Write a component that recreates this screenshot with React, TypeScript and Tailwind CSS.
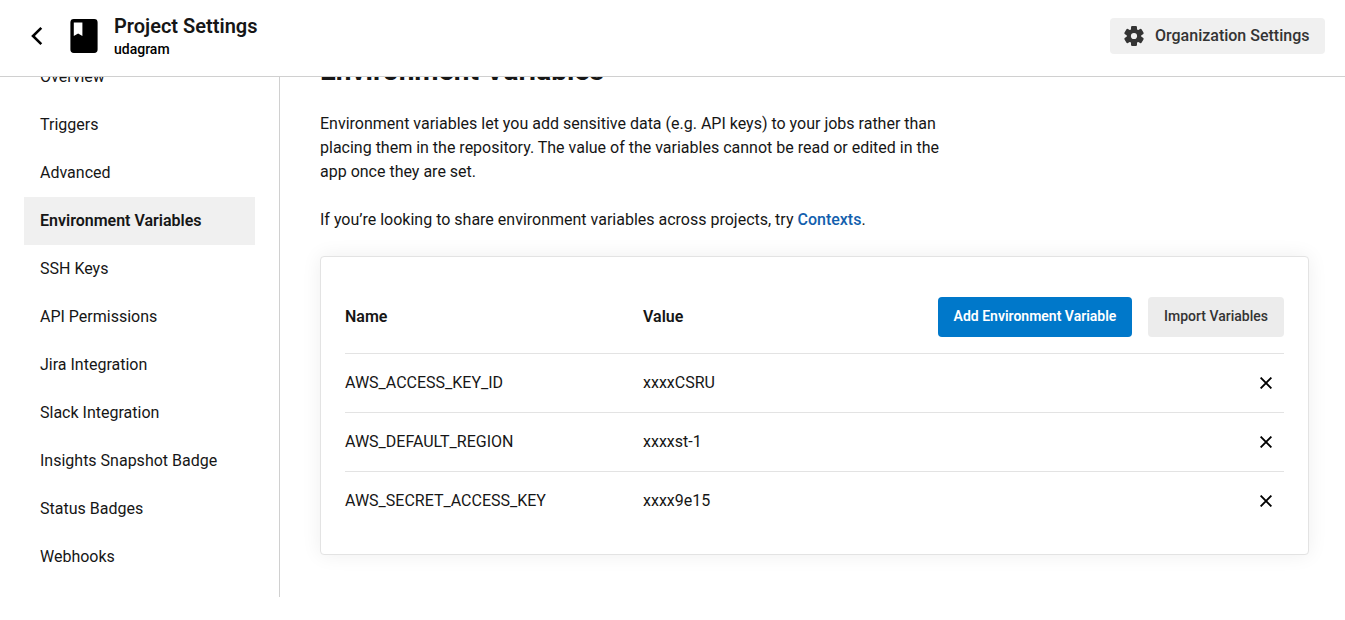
const NAV_ITEMS = [
  'Overview',
  'Triggers',
  'Advanced',
  'Environment Variables',
  'SSH Keys',
  'API Permissions',
  'Jira Integration',
  'Slack Integration',
  'Insights Snapshot Badge',
  'Status Badges',
  'Webhooks',
];

const VARIABLES = [
  { name: 'AWS_ACCESS_KEY_ID', value: 'xxxxCSRU' },
  { name: 'AWS_DEFAULT_REGION', value: 'xxxxst-1' },
  { name: 'AWS_SECRET_ACCESS_KEY', value: 'xxxx9e15' },
];

function BackIcon() {
  return (
    <svg className="h-5 w-3" viewBox="0 0 12 20" fill="none" stroke="#000" strokeWidth="2.6">
      <path d="M10.3 1.8 2 10l8.3 8.2" />
    </svg>
  );
}

function ProjectIcon() {
  return (
    <svg className="h-[34px] w-7" viewBox="0 0 28 34">
      <path
        fill="#000"
        fillRule="evenodd"
        d="M3.8 0h20.4a3.4 3.4 0 0 1 3.4 3.4v27.2a3.4 3.4 0 0 1-3.4 3.4H3.8A3.4 3.4 0 0 1 .4 30.6V3.4A3.4 3.4 0 0 1 3.8 0Zm0 3.4V17l4.3-2.6 4.3 2.6V3.4Z"
      />
    </svg>
  );
}

function GearIcon() {
  return (
    <svg className="h-6 w-6" viewBox="0 0 24 24" fill="#343434">
      <rect x="9" y="2.1" width="6" height="19.8" rx="1.2" />
      <rect x="9" y="2.1" width="6" height="19.8" rx="1.2" transform="rotate(60 12 12)" />
      <rect x="9" y="2.1" width="6" height="19.8" rx="1.2" transform="rotate(120 12 12)" />
      <circle cx="12" cy="12" r="7.3" />
      <circle cx="12" cy="12" r="3.1" fill="#f0f0f0" />
    </svg>
  );
}

function CloseIcon() {
  return (
    <svg className="h-3 w-3" viewBox="0 0 12 12" fill="none" stroke="#000" strokeWidth="1.9">
      <path d="m.6.6 10.8 10.8M11.4.6.6 11.4" />
    </svg>
  );
}

function Header() {
  return (
    <header className="flex h-[77px] items-start justify-between border-b border-[#d0d0d0] bg-white">
      <div className="flex items-start pl-[31px]">
        <button className="mt-[26px]" aria-label="Back">
          <BackIcon />
        </button>
        <div className="mt-[19px] ml-[27px]">
          <ProjectIcon />
        </div>
        <div className="mt-3.5 ml-4">
          <h1 className="text-xl leading-6 font-semibold">Project Settings</h1>
          <p className="mt-px text-sm leading-5 font-medium text-black">udagram</p>
        </div>
      </div>
      <button className="mt-[18px] mr-5 flex h-9 w-[215px] items-center gap-[9px] rounded bg-[#f0f0f0] pl-3 font-medium whitespace-nowrap text-[#343434]">
        <GearIcon />
        Organization Settings
      </button>
    </header>
  );
}

function Sidebar() {
  return (
    <nav className="w-[280px] shrink-0 border-r border-[#d0d0d0] pr-6 pl-6">
      <ul className="-mt-6">
        {NAV_ITEMS.map((item) => (
          <li
            key={item}
            className={
              item === 'Environment Variables'
                ? 'flex h-12 items-center bg-[#f0f0f0] px-4 font-semibold'
                : 'flex h-12 items-center px-4'
            }
          >
            {item}
          </li>
        ))}
      </ul>
    </nav>
  );
}

function VariablesCard() {
  return (
    <section className="mt-6 rounded border border-[#e3e3e3] bg-white p-6 shadow-[0_0_20px_rgba(0,0,0,0.07)]">
      <div className="flex items-center border-b border-[#e3e3e3] py-4 font-semibold">
        <div className="w-[298px]">Name</div>
        <div className="flex-1">Value</div>
        <div className="flex gap-4 text-sm">
          <button className="h-10 w-[194px] rounded bg-[#0078ca] pb-0.5 font-semibold text-white">
            Add Environment Variable
          </button>
          <button className="h-10 w-[136px] rounded bg-[#ececec] pb-0.5 font-medium text-[#343434]">
            Import Variables
          </button>
        </div>
      </div>
      {VARIABLES.map((variable) => (
        <div
          key={variable.name}
          className="flex h-[59px] items-center border-b border-[#e3e3e3] last:h-[58px] last:border-b-0"
        >
          <div className="w-[298px]">{variable.name}</div>
          <div className="flex-1">{variable.value}</div>
          <button className="mr-3" aria-label="Delete">
            <CloseIcon />
          </button>
        </div>
      ))}
    </section>
  );
}

export default function App() {
  return (
    <div className="h-[620px] overflow-hidden bg-white font-['Roboto',sans-serif] text-base text-[#161616]">
      <Header />
      <div className="flex h-[520px] overflow-hidden">
        <Sidebar />
        <main className="min-w-0 flex-1 pr-9 pl-10">
          <h2 className="-mt-[22px] text-[28px] leading-8 font-bold">Environment Variables</h2>
          <div className="mt-[25px] w-[640px] leading-6">
            <p>
              Environment variables let you add sensitive data (e.g. API keys) to your jobs rather than
              placing them in the repository. The value of the variables cannot be read or edited in the
              app once they are set.
            </p>
            <p className="mt-6">
              If you’re looking to share environment variables across projects, try{' '}
              <a className="font-medium text-[#135fae]">Contexts</a>.
            </p>
          </div>
          <VariablesCard />
        </main>
      </div>
    </div>
  );
}
